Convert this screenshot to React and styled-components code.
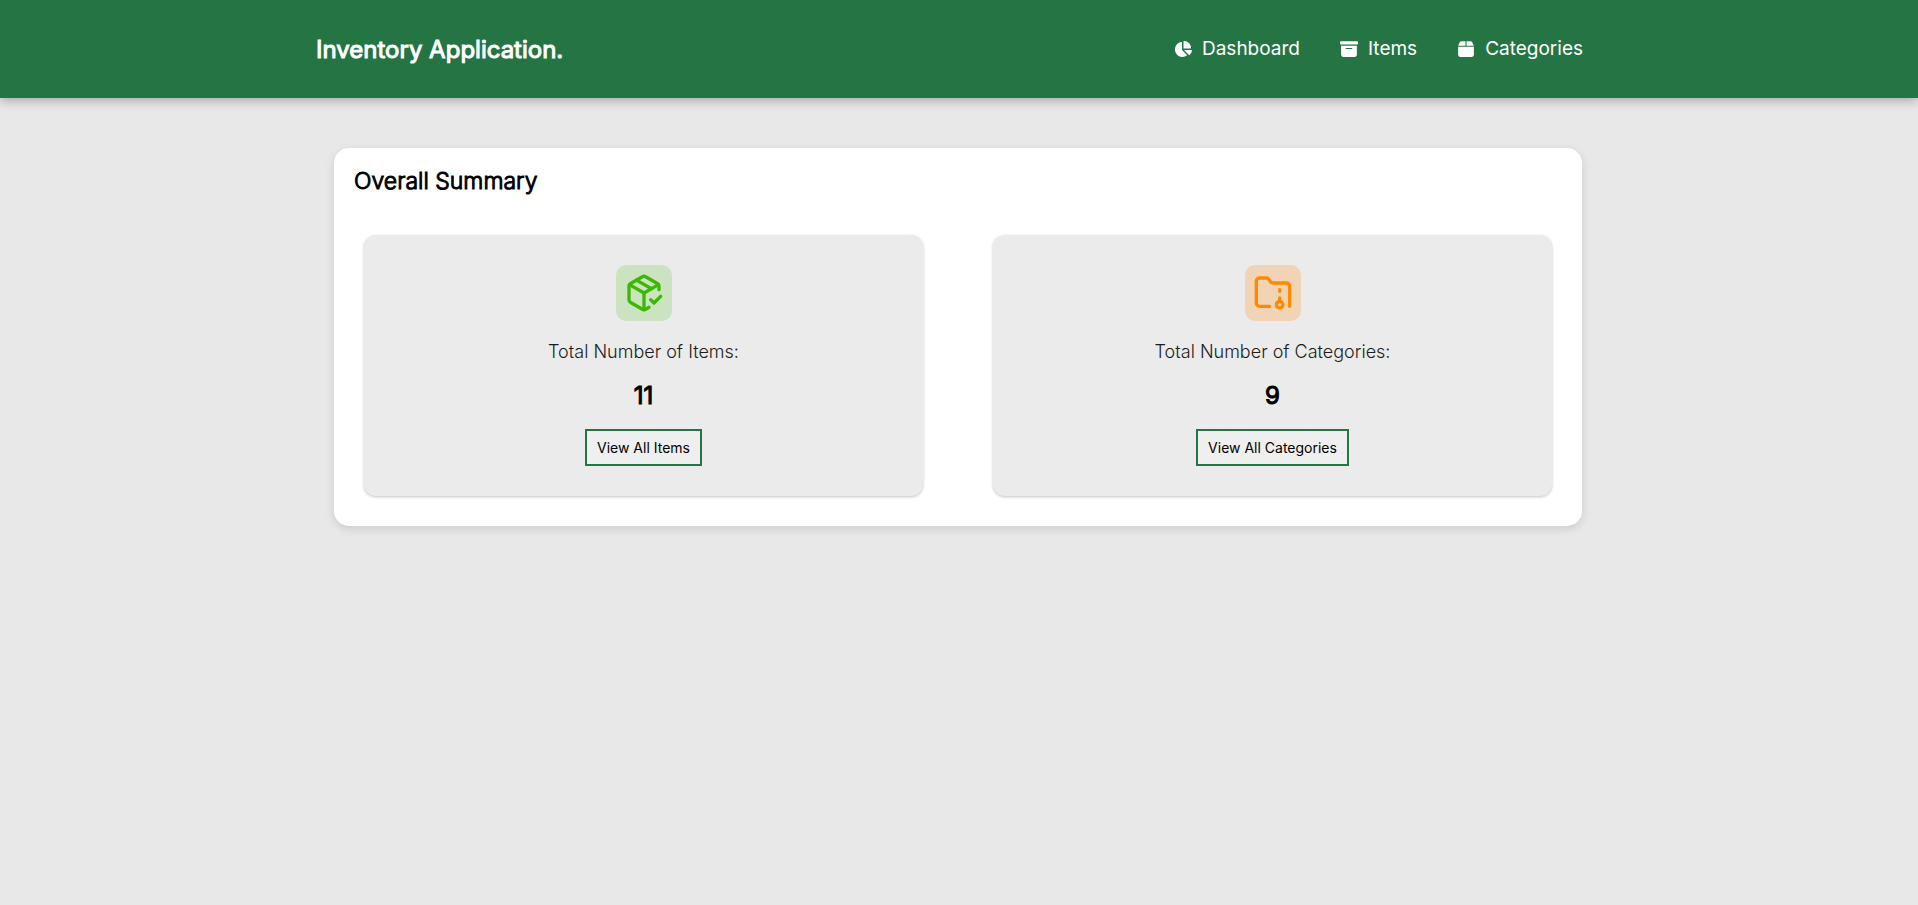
import React from "react";
import styled, { createGlobalStyle } from "styled-components";
import { FaBox, FaBoxArchive, FaChartPie } from "react-icons/fa6";
import { PackageCheck } from "lucide-react";

const GlobalStyle = createGlobalStyle`
  *, *::before, *::after { box-sizing: border-box; }
  body {
    margin: 0;
    background: #e8e8e8;
    color: #000;
    font-family: Inter, sans-serif;
    font-weight: 400;
  }
  h1, h2, p, ul { margin: 0; padding: 0; }
`;

const Header = styled.header`
  background: #257544;
  color: #fff;
  box-shadow: 0 3px 10px rgba(0, 0, 0, 0.27);
`;

const HeaderInner = styled.div`
  display: flex;
  align-items: center;
  justify-content: space-between;
  max-width: 1286px;
  min-height: 98px;
  margin: 0 auto;
  padding-right: 19px;
`;

const Brand = styled.h1`
  padding-top: 2px;
  font-size: 24px;
  line-height: 30px;
  font-weight: 400;
  -webkit-text-stroke: 1px currentColor;
`;

const NavList = styled.ul`
  display: flex;
  gap: 40px;
  list-style: none;
`;

const NavLink = styled.a`
  display: flex;
  align-items: center;
  gap: 10px;
  color: inherit;
  font-size: 19px;
  line-height: 24px;
  text-decoration: none;

  svg { display: block; }
`;

const Main = styled.main`
  max-width: 1288px;
  margin: 0 auto;
  padding: 50px 21px 50px 19px;
`;

const Summary = styled.section`
  padding: 19px 30px 30px;
  border-radius: 15px;
  background: #fff;
  box-shadow: 0 3px 10px rgba(0, 0, 0, 0.12);
`;

const SummaryTitle = styled.h2`
  margin: 0 -10px 39px;
  font-size: 23px;
  line-height: 29px;
  font-weight: 300;
  -webkit-text-stroke: 1px currentColor;
`;

const Cards = styled.div`
  display: grid;
  grid-template-columns: 1fr 1fr;
  gap: 70px;
`;

const Card = styled.article`
  display: flex;
  flex-direction: column;
  align-items: center;
  padding: 30px;
  border-radius: 12px;
  background: #ebebeb;
  box-shadow: 0 1px 3px rgba(0, 0, 0, 0.24);
`;

const IconTile = styled.div`
  display: grid;
  place-items: center;
  width: 56px;
  height: 56px;
  margin-bottom: 20px;
  border-radius: 10px;
  background: ${({ $tint }) => $tint};
  color: ${({ $color }) => $color};
`;

const Label = styled.p`
  margin-bottom: 18px;
  color: #1c1c1c;
  font-size: 18px;
  font-weight: 300;
  line-height: 22px;
`;

const Count = styled.p`
  margin-bottom: 18px;
  font-size: 24px;
  line-height: 30px;
  -webkit-text-stroke: 1px currentColor;
`;

const ViewButton = styled.button`
  padding: 8px 10px;
  border: 2px solid #257544;
  background: #efefef;
  color: #000;
  font-family: inherit;
  font-size: 14px;
  line-height: 17px;
  cursor: pointer;
`;

const FolderZip = ({ size, ...rest }) => (
  <svg
    width={size}
    height={size}
    viewBox="0 0 24 24"
    fill="none"
    stroke="currentColor"
    strokeWidth="2"
    strokeLinecap="round"
    strokeLinejoin="round"
    {...rest}
  >
    <path d="M22 20V8a2 2 0 0 0-2-2h-7.93a2 2 0 0 1-1.66-.9l-.82-1.2A2 2 0 0 0 7.93 3H4a2 2 0 0 0-2 2v13c0 1.1.9 2 2 2h6" />
    <circle cx="16" cy="19" r="2" />
    <path d="M16 11v-1" />
    <path d="M16 17v-2" />
  </svg>
);

const links = [
  { label: "Dashboard", Icon: FaChartPie },
  { label: "Items", Icon: FaBoxArchive },
  { label: "Categories", Icon: FaBox },
];

const stats = [
  { name: "Items", count: 11, Icon: PackageCheck, color: "#3bb900", tint: "#cbe3c1" },
  { name: "Categories", count: 9, Icon: FolderZip, color: "#ff8a00", tint: "#f1d4b5" },
];

export default function App() {
  return (
    <>
      <GlobalStyle />
      <Header>
        <HeaderInner>
          <Brand>Inventory Application.</Brand>
          <nav>
            <NavList>
              {links.map(({ label, Icon }) => (
                <li key={label}>
                  <NavLink href="#">
                    <Icon size={18} aria-hidden="true" />
                    {label}
                  </NavLink>
                </li>
              ))}
            </NavList>
          </nav>
        </HeaderInner>
      </Header>
      <Main>
        <Summary>
          <SummaryTitle>Overall Summary</SummaryTitle>
          <Cards>
            {stats.map(({ name, count, Icon, color, tint }) => (
              <Card key={name}>
                <IconTile $color={color} $tint={tint}>
                  <Icon size={40} aria-hidden="true" />
                </IconTile>
                <Label>Total Number of {name}:</Label>
                <Count>{count}</Count>
                <ViewButton type="button">View All {name}</ViewButton>
              </Card>
            ))}
          </Cards>
        </Summary>
      </Main>
    </>
  );
}
